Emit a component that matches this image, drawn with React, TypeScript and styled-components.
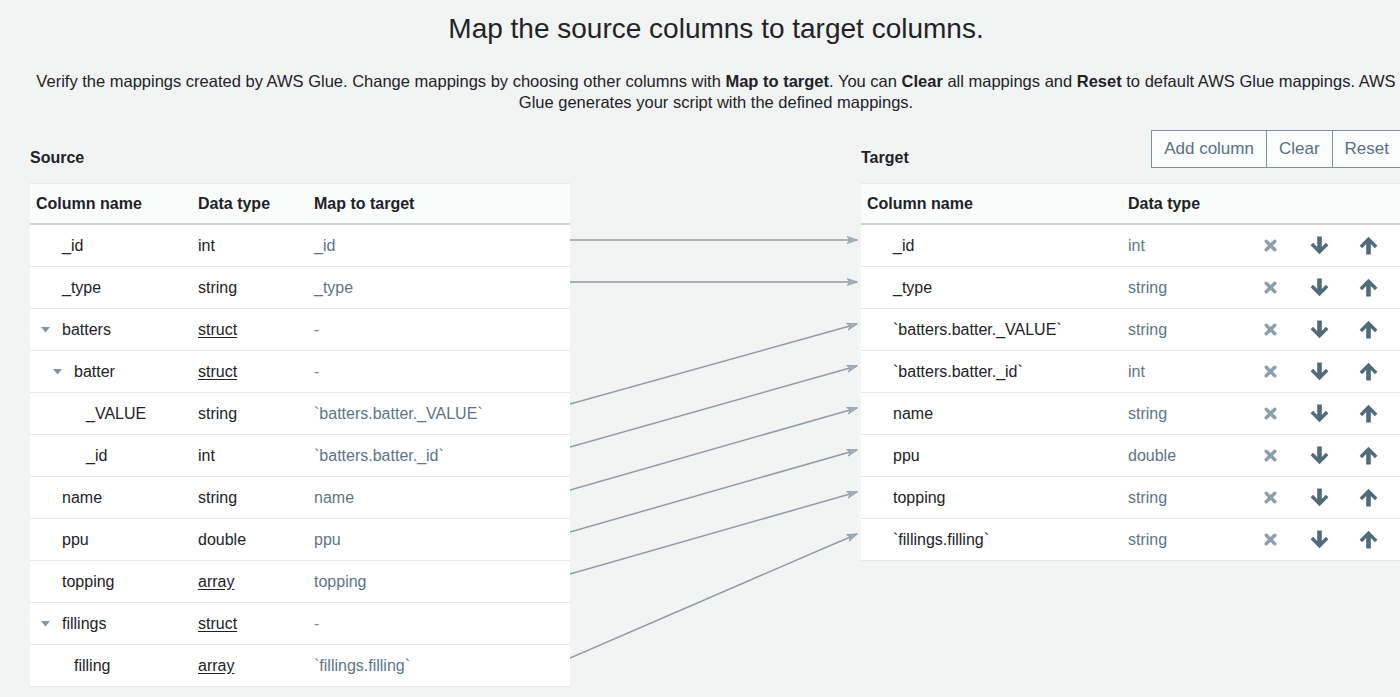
import React from 'react';
import styled, { createGlobalStyle } from 'styled-components';

const GlobalStyle = createGlobalStyle`
  html, body {
    margin: 0;
    padding: 0;
    background: #f2f4f4;
    overflow: hidden;
  }
  body {
    font-family: 'Liberation Sans', Arial, sans-serif;
    color: #1d2327;
  }
`;

type SourceRow = {
  name: string;
  level: number;
  caret?: boolean;
  type: string;
  complex?: boolean;
  map: string;
};

const sourceRows: SourceRow[] = [
  { name: '_id', level: 0, type: 'int', map: '_id' },
  { name: '_type', level: 0, type: 'string', map: '_type' },
  { name: 'batters', level: 0, caret: true, type: 'struct', complex: true, map: '-' },
  { name: 'batter', level: 1, caret: true, type: 'struct', complex: true, map: '-' },
  { name: '_VALUE', level: 2, type: 'string', map: '`batters.batter._VALUE`' },
  { name: '_id', level: 2, type: 'int', map: '`batters.batter._id`' },
  { name: 'name', level: 0, type: 'string', map: 'name' },
  { name: 'ppu', level: 0, type: 'double', map: 'ppu' },
  { name: 'topping', level: 0, type: 'array', complex: true, map: 'topping' },
  { name: 'fillings', level: 0, caret: true, type: 'struct', complex: true, map: '-' },
  { name: 'filling', level: 1, type: 'array', complex: true, map: '`fillings.filling`' },
];

const targetRows = [
  { name: '_id', type: 'int' },
  { name: '_type', type: 'string' },
  { name: '`batters.batter._VALUE`', type: 'string' },
  { name: '`batters.batter._id`', type: 'int' },
  { name: 'name', type: 'string' },
  { name: 'ppu', type: 'double' },
  { name: 'topping', type: 'string' },
  { name: '`fillings.filling`', type: 'string' },
];

// start y at the source edge, end y at the target edge (relative to the table top)
const links = [
  [57, 57],
  [99, 99],
  [221, 141],
  [264, 183],
  [307, 225],
  [349, 267],
  [391, 309],
  [475, 351],
];

const Page = styled.div`
  width: 1372px;
  margin-left: 30px;
  padding-top: 12px;
`;

const Title = styled.h1`
  margin: 0;
  text-align: center;
  font-size: 28px;
  line-height: 34px;
  font-weight: 400;
  color: #1f2428;
`;

const Intro = styled.p`
  margin: 25px 0 0;
  text-align: center;
  font-size: 16.5px;
  line-height: 21px;
  color: #1d2327;

  b {
    font-weight: 700;
  }
`;

const Layout = styled.div`
  display: grid;
  grid-template-columns: 540px 291px 541px;
  grid-template-rows: 55px auto;
  row-gap: 15px;
`;

const SectionHead = styled.div`
  display: flex;
  align-items: flex-end;
  justify-content: space-between;
`;

const SectionLabel = styled.div`
  font-size: 16px;
  line-height: 20px;
  font-weight: 700;
`;

const ButtonGroup = styled.div`
  display: flex;
`;

const GroupButton = styled.button`
  height: 38px;
  padding: 0 12px;
  margin-left: -1px;
  border: 1px solid #7f939e;
  background: #fbfcfc;
  color: #5a7180;
  font-family: 'Liberation Sans', Arial, sans-serif;
  font-size: 17px;
  cursor: pointer;
`;

const Table = styled.div`
  background: #fff;
  align-self: start;
`;

const HeadRow = styled.div<{ $cols: string }>`
  display: grid;
  grid-template-columns: ${(p) => p.$cols};
  height: 39px;
  align-items: center;
  background: #fafbfb;
  border-top: 1px solid #e6e9ea;
  border-bottom: 2px solid #cfd4d7;
  font-size: 16px;
  font-weight: 700;
  padding-left: 6px;
`;

const Row = styled.div<{ $cols: string }>`
  display: grid;
  grid-template-columns: ${(p) => p.$cols};
  height: 41px;
  align-items: center;
  border-bottom: 1px solid #e3e7e9;
  font-size: 16px;
  padding-left: 6px;
`;

const NameCell = styled.div<{ $level: number }>`
  display: flex;
  align-items: center;
  padding-left: ${(p) => p.$level * 12}px;
`;

const CaretSlot = styled.span`
  width: 26px;
  flex: none;
  display: flex;
  align-items: center;
  padding-left: 5px;
  box-sizing: border-box;
`;

const TypeText = styled.span<{ $complex?: boolean }>`
  text-decoration: ${(p) => (p.$complex ? 'underline' : 'none')};
  text-underline-offset: 2px;
`;

const MapText = styled.span<{ $empty?: boolean }>`
  color: ${(p) => (p.$empty ? '#7b8a93' : '#5d7685')};
`;

const TargetName = styled.span`
  padding-left: 26px;
`;

const TargetType = styled.span`
  color: #5d7685;
`;

const IconCell = styled.span`
  display: flex;
  justify-content: center;
  align-items: center;
`;

const Connectors = styled.svg`
  display: block;
  grid-column: 2;
  grid-row: 2;
`;

const Caret = () => (
  <svg width="9" height="6" viewBox="0 0 9 6">
    <path d="M0 0 L9 0 L4.5 5.5 Z" fill="#8396a1" />
  </svg>
);

const RemoveIcon = () => (
  <svg width="13" height="13" viewBox="0 0 13 13">
    <path d="M2.2 2.2 L10.8 10.8 M10.8 2.2 L2.2 10.8" stroke="#8d9fa9" strokeWidth="3.4" strokeLinecap="round" />
  </svg>
);

const ArrowIcon = ({ up }: { up?: boolean }) => (
  <svg width="19" height="19" viewBox="0 0 19 19" style={up ? undefined : { transform: 'rotate(180deg)' }}>
    <path
      d="M9.5 0.8 L18.4 9.7 L15.9 12.2 L11.8 8.1 L11.8 18.4 L7.2 18.4 L7.2 8.1 L3.1 12.2 L0.6 9.7 Z"
      fill="#526b79"
    />
  </svg>
);

const sourceCols = '162px 116px 1fr';
const targetCols = '261px 118px 49px 49px 49px 1fr';

const App = () => {
  return (
    <Page>
      <GlobalStyle />
      <Title>Map the source columns to target columns.</Title>
      <Intro>
        Verify the mappings created by AWS Glue. Change mappings by choosing other columns with <b>Map to target</b>. You
        can <b>Clear</b> all mappings and <b>Reset</b> to default AWS Glue mappings. AWS Glue generates your script with
        the defined mappings.
      </Intro>

      <Layout>
        <SectionHead>
          <SectionLabel>Source</SectionLabel>
        </SectionHead>
        <div />
        <SectionHead>
          <SectionLabel>Target</SectionLabel>
          <ButtonGroup>
            <GroupButton>Add column</GroupButton>
            <GroupButton>Clear</GroupButton>
            <GroupButton>Reset</GroupButton>
          </ButtonGroup>
        </SectionHead>

        <Table>
          <HeadRow $cols={sourceCols}>
            <span>Column name</span>
            <span>Data type</span>
            <span>Map to target</span>
          </HeadRow>
          {sourceRows.map((r, i) => (
            <Row key={i} $cols={sourceCols}>
              <NameCell $level={r.level}>
                <CaretSlot>{r.caret && <Caret />}</CaretSlot>
                {r.name}
              </NameCell>
              <span>
                <TypeText $complex={r.complex}>{r.type}</TypeText>
              </span>
              <MapText $empty={r.map === '-'}>{r.map}</MapText>
            </Row>
          ))}
        </Table>

        <Connectors width="291" height="504" viewBox="0 0 291 504">
          <defs>
            <marker id="head" markerWidth="11" markerHeight="8" refX="10" refY="4" orient="auto" markerUnits="userSpaceOnUse">
              <path d="M0 0.5 L10.5 4 L0 7.5 L3 4 Z" fill="#a4b1b9" stroke="#8e9ca5" strokeWidth="0.8" />
            </marker>
          </defs>
          {links.map(([a, b], i) => (
            <line key={i} x1="0" y1={a} x2="287" y2={b} stroke="#8e9ca5" strokeWidth="1.5" markerEnd="url(#head)" />
          ))}
        </Connectors>

        <Table>
          <HeadRow $cols={targetCols}>
            <span>Column name</span>
            <span>Data type</span>
          </HeadRow>
          {targetRows.map((r, i) => (
            <Row key={i} $cols={targetCols}>
              <TargetName>{r.name}</TargetName>
              <TargetType>{r.type}</TargetType>
              <IconCell>
                <RemoveIcon />
              </IconCell>
              <IconCell>
                <ArrowIcon />
              </IconCell>
              <IconCell>
                <ArrowIcon up />
              </IconCell>
            </Row>
          ))}
        </Table>
      </Layout>
    </Page>
  );
};

export default App;
